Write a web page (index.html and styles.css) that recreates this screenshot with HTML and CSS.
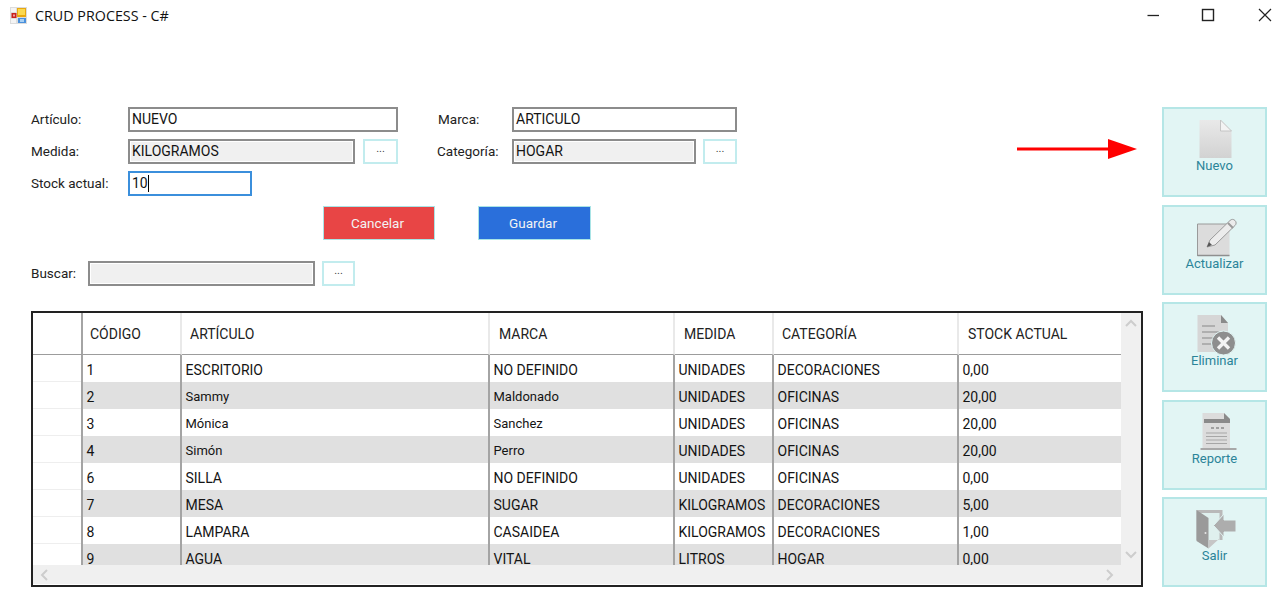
FILE: index.html
```html
<!DOCTYPE html>
<html lang="es">
<head>
<meta charset="utf-8">
<title>CRUD PROCESS - C#</title>
<link rel="stylesheet" href="styles.css">
</head>
<body>
<div class="app">
  <header class="titlebar">
    <svg class="appicon" width="17" height="17" viewBox="0 0 17 17">
      <rect width="17" height="17" fill="#dcdcdc"/>
      <rect x="1" y="1" width="5" height="4" fill="#f4f4f4"/>
      <rect x="1" y="12" width="5" height="4" fill="#f4f4f4"/>
      <rect x="1.5" y="6" width="5" height="5" fill="#c8201c"/>
      <rect x="3" y="7.5" width="2" height="2" fill="#f0a0a0"/>
      <rect x="7" y="1" width="9" height="9" fill="#e8a810"/>
      <rect x="8" y="2" width="7" height="6" fill="#fbd950"/>
      <rect x="8" y="11" width="8" height="5" fill="#4a90dc"/>
      <rect x="10" y="12" width="4" height="3" fill="#a8d0f4"/>
    </svg>
    <span class="apptitle">CRUD PROCESS - C#</span>
    <div class="winctl">
      <svg width="14" height="14" viewBox="0 0 14 14"><path d="M1.5 7.5H13" stroke="#222" stroke-width="1.3" fill="none"/></svg>
      <svg class="winmax" width="14" height="14" viewBox="0 0 14 14"><rect x="1.5" y="1.5" width="11" height="11" stroke="#222" stroke-width="1.4" fill="none"/></svg>
      <svg width="14" height="14" viewBox="0 0 14 14"><path d="M1 1L13 13M13 1L1 13" stroke="#222" stroke-width="1.2" fill="none"/></svg>
    </div>
  </header>

  <svg class="arrow" width="122" height="22" viewBox="0 0 122 22">
    <path d="M0 11H92" stroke="#f00" stroke-width="3" fill="none"/>
    <path d="M91 1L120 11L91 21Z" fill="#f00"/>
  </svg>

  <main class="content">
    <section class="left">
      <form class="form">
        <label class="lbl">Artículo:</label>
        <div class="field wide-l">NUEVO</div>
        <label class="lbl lbl-r">Marca:</label>
        <div class="field wide-r">ARTICULO</div>

        <label class="lbl">Medida:</label>
        <div class="field ro">KILOGRAMOS</div>
        <div class="dots dots-l">...</div>
        <label class="lbl lbl-r lbl-cat">Categoría:</label>
        <div class="field ro field-r">HOGAR</div>
        <div class="dots dots-r">...</div>

        <label class="lbl">Stock actual:</label>
        <div class="field focus"><span class="caret">10</span></div>
      </form>

      <div class="actions">
        <div class="action cancel">Cancelar</div>
        <div class="action save">Guardar</div>
      </div>

      <div class="search">
        <label class="lbl">Buscar:</label>
        <div class="field ro"></div>
        <div class="dots">...</div>
      </div>

      <div class="datagrid">
        <div class="viewport">
          <table>
            <colgroup>
              <col class="c0"><col class="c1"><col class="c2"><col class="c3"><col class="c4"><col class="c5"><col class="c6">
            </colgroup>
            <thead>
              <tr><th></th><th>CÓDIGO</th><th>ARTÍCULO</th><th>MARCA</th><th>MEDIDA</th><th>CATEGORÍA</th><th>STOCK ACTUAL</th></tr>
            </thead>
            <tbody>
              <tr><td></td><td>1</td><td>ESCRITORIO</td><td>NO DEFINIDO</td><td>UNIDADES</td><td>DECORACIONES</td><td>0,00</td></tr>
              <tr><td></td><td>2</td><td class="lc">Sammy</td><td class="lc">Maldonado</td><td>UNIDADES</td><td>OFICINAS</td><td>20,00</td></tr>
              <tr><td></td><td>3</td><td class="lc">Mónica</td><td class="lc">Sanchez</td><td>UNIDADES</td><td>OFICINAS</td><td>20,00</td></tr>
              <tr><td></td><td>4</td><td class="lc">Simón</td><td class="lc">Perro</td><td>UNIDADES</td><td>OFICINAS</td><td>20,00</td></tr>
              <tr><td></td><td>6</td><td>SILLA</td><td>NO DEFINIDO</td><td>UNIDADES</td><td>OFICINAS</td><td>0,00</td></tr>
              <tr><td></td><td>7</td><td>MESA</td><td>SUGAR</td><td>KILOGRAMOS</td><td>DECORACIONES</td><td>5,00</td></tr>
              <tr><td></td><td>8</td><td>LAMPARA</td><td>CASAIDEA</td><td>KILOGRAMOS</td><td>DECORACIONES</td><td>1,00</td></tr>
              <tr><td></td><td>9</td><td>AGUA</td><td>VITAL</td><td>LITROS</td><td>HOGAR</td><td>0,00</td></tr>
            </tbody>
          </table>
        </div>
        <div class="vbar">
          <svg width="12" height="8" viewBox="0 0 12 8"><path d="M1 7L6 2L11 7" stroke="#cdcdcd" stroke-width="2" fill="none"/></svg>
          <svg width="12" height="8" viewBox="0 0 12 8"><path d="M1 1L6 6L11 1" stroke="#cdcdcd" stroke-width="2" fill="none"/></svg>
        </div>
        <div class="hbar">
          <svg width="8" height="12" viewBox="0 0 8 12"><path d="M7 1L2 6L7 11" stroke="#cdcdcd" stroke-width="2" fill="none"/></svg>
          <svg width="8" height="12" viewBox="0 0 8 12"><path d="M1 1L6 6L1 11" stroke="#cdcdcd" stroke-width="2" fill="none"/></svg>
        </div>
        <div class="corner"></div>
      </div>
    </section>

    <aside class="side">
      <div class="tool">
        <svg width="48" height="40" viewBox="0 0 48 40">
          <defs><linearGradient id="gp" x1="0" y1="0" x2="0" y2="1"><stop offset="0" stop-color="#e9e9e9"/><stop offset="1" stop-color="#d2d2d2"/></linearGradient></defs>
          <path d="M8.5 0H29.5L40.5 11V38H8.5Z" fill="url(#gp)"/>
          <path d="M29.5 0V11H40.5Z" fill="#f3f3f3" stroke="#c4c4c4" stroke-width="1"/>
        </svg>
        <span>Nuevo</span>
      </div>
      <div class="tool">
        <svg width="48" height="40" viewBox="0 0 48 40">
          <rect x="6.5" y="6" width="32" height="32" fill="#dcdcdc"/>
          <path d="M6.5 38V6H38.5" fill="none" stroke="#9a9a9a" stroke-width="1"/>
          <path d="M6.5 37.5H38.5" stroke="#8f8f8f" stroke-width="1.6"/>
          <path d="M16 29L19 22L39 2.5C40.5 1 42.5 1 44 2.5C45.5 4 45.5 6 44 7.5L24 27Z" fill="#ececec" stroke="#9a9a9a" stroke-width="1"/>
          <path d="M37 5L42 10" stroke="#9a9a9a" stroke-width="2"/>
          <path d="M16 29L18 24L21 27Z" fill="#555"/>
        </svg>
        <span>Actualizar</span>
      </div>
      <div class="tool">
        <svg width="48" height="40" viewBox="0 0 48 40">
          <path d="M6.5 0H30L37 8V37H6.5Z" fill="#d6d6d6"/>
          <path d="M30 0V8H37Z" fill="#8a8a8a"/>
          <path d="M11 11H24M11 17H28M11 23H22M11 29H20" stroke="#a2a2a2" stroke-width="1.4"/>
          <circle cx="32.5" cy="28" r="12" fill="#8e8e8e" stroke="#e2f5f4" stroke-width="1"/>
          <path d="M27 22.5L38 33.5M38 22.5L27 33.5" stroke="#f4f4f4" stroke-width="3.4"/>
        </svg>
        <span>Eliminar</span>
      </div>
      <div class="tool">
        <svg width="48" height="40" viewBox="0 0 48 40">
          <path d="M11.5 0H33L39 6V35H11.5Z" fill="#dcdcdc"/>
          <path d="M33 0V6H39Z" fill="#8a8a8a"/>
          <rect x="13" y="6" width="26" height="4" fill="#8a8a8a"/>
          <path d="M20 15H23M25 15H28M30 15H33" stroke="#8a8a8a" stroke-width="1.4"/>
          <path d="M15 20H36M15 23.5H36M15 27H36M15 30.500H36" stroke="#a6a6a6" stroke-width="1"/>
          <rect x="9.500" y="35" width="36" height="2" fill="#a8a8a8"/>
        </svg>
        <span>Reporte</span>
      </div>
      <div class="tool">
        <svg width="48" height="40" viewBox="0 0 48 40">
          <path d="M5.500 0H31.500V30H5.500Z" fill="#b9b9b9"/>
          <path d="M9 3H28.500V30H9Z" fill="#dff0ee"/>
          <path d="M5.500 0L17.500 8V38.500L5.500 31Z" fill="#9a9a9a"/>
          <path d="M17.500 8V38.500L28 29V30H17.500Z" fill="#c6c6c6"/>
          <circle cx="14.500" cy="23" r="1" fill="#e6e6e6"/>
          <path d="M22.500 15.500L33 4V10H45V22H33V27Z" fill="#adadad" stroke="#e2f5f4" stroke-width="1"/>
        </svg>
        <span>Salir</span>
      </div>
    </aside>
  </main>
</div>
</body>
</html>
```

FILE: styles.css
```css
* { box-sizing: border-box; }

html, body { margin: 0; padding: 0; background: #fff; }

body {
  font-family: Roboto, "Liberation Sans", sans-serif;
  font-size: 14px;
  color: #1c1c1c;
}

.app {
  position: relative;
  width: 1288px;
  height: 600px;
  overflow: hidden;
  display: flex;
  flex-direction: column;
}

/* title bar */
.titlebar {
  height: 32px;
  flex: none;
  display: flex;
  align-items: flex-start;
  padding: 7px 16px 0 10px;
}
.appicon { flex: none; }
.apptitle {
  margin-left: 8px;
  font-family: "Open Sans", sans-serif;
  font-size: 14.3px;
  line-height: 18px;
  color: #111;
}
.winctl {
  margin-left: auto;
  display: flex;
  gap: 42px;
  padding-top: 1px;
}
.winmax { margin: 0 1px 0 -1px; }

/* annotation arrow */
.arrow {
  position: absolute;
  left: 1017px;
  top: 138px;
}

/* body */
.content {
  display: flex;
  padding-top: 75px;
}
.left {
  width: 1143px;
  padding-left: 31px;
}

/* form */
.form {
  display: grid;
  grid-template-columns: 97px 227px 8px 35px 40px 74px 184px 7px 34px;
  grid-auto-rows: 25px;
  row-gap: 7px;
}
.lbl {
  display: flex;
  align-items: center;
  padding-bottom: 1px;
  font-size: 13.5px;
  color: #222;
  white-space: nowrap;
}
.lbl-r { grid-column: 6; }
.lbl-cat { margin-left: -1px; }
.field {
  display: flex;
  align-items: center;
  border: 2px solid #8c8c8c;
  padding: 0 0 1px 2px;
  background: #fff;
  white-space: nowrap;
  height: 25px;
  color: #141414;
}
.wide-l { grid-column: 2 / 5; }
.wide-r { grid-column: 7 / 10; }
.field-r { grid-column: 7; }
.dots-l { grid-column: 4; }
.dots-r { grid-column: 9; }
.ro {
  background: #f0f0f0;
  box-shadow: inset 0 0 0 1px #fff;
}
.focus {
  width: 124px;
  grid-column: 2;
  border-color: #3b8fdc;
}
.caret { border-right: 1px solid #000; line-height: 17px; }
.dots {
  display: flex;
  align-items: flex-start;
  justify-content: center;
  height: 25px;
  background: #fff;
  border: 2px solid #c2ecee;
  font-size: 11px;
  line-height: 15px;
  color: #444;
}

/* action buttons */
.actions {
  display: flex;
  gap: 43px;
  margin: 10px 0 0 292px;
}
.action {
  width: 112px;
  height: 34px;
  padding: 0 3px 1px 0;
  display: flex;
  align-items: center;
  justify-content: center;
  border: 1px solid #a9e4e6;
  font-size: 13.5px;
  color: #f3f3f3;
}
.cancel { background: #e84545; }
.save { background: #2a6fdb; width: 113px; }

/* search */
.search {
  display: grid;
  grid-template-columns: 57px 227px 33px;
  margin-top: 21px;
  width: 324px;
}
.search .dots { grid-column: 3; width: 33px; margin-left: 7px; }

/* data grid */
.datagrid {
  margin-top: 25px;
  width: 1112px;
  height: 276px;
  border: 2px solid #222;
  display: grid;
  grid-template-columns: 1088px 20px;
  grid-template-rows: 252px 19px;
}
.viewport { overflow: hidden; background: #fff; }
table {
  table-layout: fixed;
  width: 1088px;
  border-collapse: separate;
  border-spacing: 0;
}
.c0 { width: 50px; }
.c1 { width: 99px; }
.c2 { width: 308px; }
.c3 { width: 185px; }
.c4 { width: 99px; }
.c5 { width: 185px; }
.c6 { width: 162px; }

th {
  height: 42px;
  font-weight: 400;
  text-align: left;
  padding: 0 0 0 9px;
  border-right: 2px solid #e9e9e9;
  border-bottom: 1px solid #9c9c9c;
  color: #222;
}
th:first-child { border-right-color: #a4a4a4; }
th:nth-child(2) { padding-left: 7px; }
th:nth-child(3), th:nth-child(6) { padding-left: 8px; }
th:last-child { border-right: 0; }
td {
  height: 27px;
  padding: 2px 0 0 3.5px;
  border-right: 2px solid #a4a4a4;
  white-space: nowrap;
  color: #141414;
}
td.lc { font-size: 13px; }
td:last-child { border-right: 0; }
tbody tr:nth-child(even) td { background: #e0e0e0; }
tbody tr td:first-child,
tbody tr:nth-child(even) td:first-child {
  background: #fff;
  box-shadow: inset 0 -1px 0 #eeeeee;
}

.vbar {
  background: #f0f0f0;
  display: flex;
  flex-direction: column;
  justify-content: space-between;
  align-items: center;
  padding: 6px 0;
}
.hbar {
  background: #f0f0f0;
  display: flex;
  justify-content: space-between;
  align-items: center;
  padding: 0 7px;
}
.corner { background: #f0f0f0; }

/* right tool buttons */
.side {
  margin-left: 19px;
  display: flex;
  flex-direction: column;
  gap: 7.5px;
}
.tool {
  width: 105px;
  height: 90px;
  background: #e2f5f4;
  border: 2px solid #b5e6e6;
  padding-top: 11px;
  display: flex;
  flex-direction: column;
  align-items: center;
}
.tool svg { display: block; flex: none; }
.tool span {
  margin-top: -2px;
  font-size: 13px;
  line-height: 16px;
  color: #2b8499;
}
```
